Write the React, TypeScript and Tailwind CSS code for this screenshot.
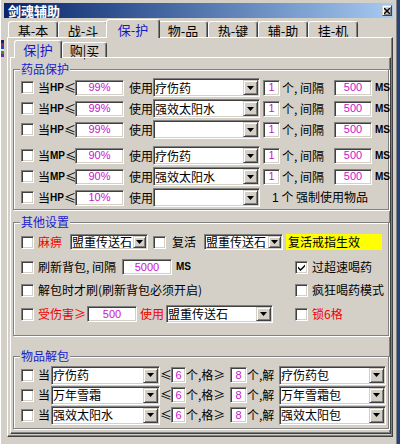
import type { ReactNode } from "react";

const SUNKEN =
	"border border-t-[#808080] border-l-[#808080] border-r-white border-b-white shadow-[inset_1px_1px_0_#404040,inset_-1px_-1px_0_#d4d0c8]";
const RAISED =
	"border border-t-[#d4d0c8] border-l-[#d4d0c8] border-r-[#404040] border-b-[#404040] shadow-[inset_1px_1px_0_#fff,inset_-1px_-1px_0_#808080]";
const ETCHED =
	"border border-[#808080] shadow-[inset_1px_1px_0_#fff,1px_1px_0_#fff]";
const NUM = "font-['Liberation_Sans',sans-serif]";

function Check({ on = false, cls = "" }: { on?: boolean; cls?: string }) {
	return (
		<span
			className={`flex h-[13px] w-[13px] shrink-0 items-center justify-center bg-white ${SUNKEN} ${cls}`}
		>
			{on && (
				<svg width="7" height="7" viewBox="0 0 7 7">
					<path d="M0 2.5 L2.5 5 L7 0.5 L7 2.5 L2.5 7 L0 4.5 Z" fill="#000" />
				</svg>
			)}
		</span>
	);
}

function Combo({ cls, btn = "w-[15px]", text = "" }: { cls: string; btn?: string; text?: string }) {
	return (
		<span className={`flex shrink-0 items-stretch bg-white p-[1px] ${SUNKEN} ${cls}`}>
			<span className="flex flex-1 items-center whitespace-nowrap leading-none">{text}</span>
			<span className={`flex shrink-0 items-center justify-center bg-[#d4d0c8] ${RAISED} ${btn}`}>
				<svg width="7" height="4" viewBox="0 0 7 4">
					<path d="M0 0h7L3.5 4z" fill="#000" />
				</svg>
			</span>
		</span>
	);
}

function Val({ cls, v }: { cls: string; v: string }) {
	return (
		<span
			className={`flex shrink-0 items-center justify-center bg-white text-[11px] leading-none text-[#cc10cc] ${NUM} ${SUNKEN} ${cls}`}
		>
			{v}
		</span>
	);
}

function Group({ title, cls, children }: { title: string; cls: string; children: ReactNode }) {
	return (
		<div className={`relative ml-[2px] w-[376px] ${ETCHED} ${cls}`}>
			<span className="absolute left-[6px] top-[-8px] bg-[#d4d0c8] px-[1px] text-[#1a1ad0]">
				{title}
			</span>
			{children}
		</div>
	);
}

const TABS = ["基-本", "战-斗", "保-护", "物-品", "热-键", "辅-助", "挂-机"];

const DRUGS = [
	{ k: "HP", p: "99%", item: "疗伤药" },
	{ k: "HP", p: "99%", item: "强效太阳水" },
	{ k: "HP", p: "99%", item: "" },
	{ k: "MP", p: "90%", item: "疗伤药", gap: true },
	{ k: "MP", p: "90%", item: "强效太阳水" },
	{ k: "HP", p: "10%", item: "", force: true },
];

const UNPACK = [
	["疗伤药", "疗伤药包"],
	["万年雪霜", "万年雪霜包"],
	["强效太阳水", "强效太阳包"],
];

export default function App() {
	return (
		<div className="flex h-[444px] w-[400px] overflow-hidden bg-[#24427e] font-['Noto_Sans_CJK_SC',sans-serif] text-[12px] leading-[14px] text-black">
			{/* left frame */}
			<div className="flex w-[4px] shrink-0 flex-col border-l border-l-white bg-[#d4d0c8]">
				<div className="mt-[40px] flex flex-col">
					<span className="h-[3px] bg-[#202060]" />
					<span className="h-[3px] bg-[#c02020]" />
					<span className="h-[3px] bg-[#2040e0]" />
					<span className="h-[2px] bg-[#e0e0e0]" />
					<span className="h-[3px] bg-[#20a020]" />
					<span className="h-[3px] bg-[#8020a0]" />
				</div>
			</div>

			<div className="flex w-[389px] shrink-0 flex-col bg-[#d4d0c8]">
				{/* title bar */}
				<div className="mt-[3px] flex h-[15px] items-center justify-between bg-gradient-to-r from-[#0a246a] to-[#a6caf0] pl-[4px] pr-[1px]">
					<span className="text-[13px] font-bold leading-none text-white">剑魂辅助</span>
					<span className={`flex h-[11px] w-[10px] items-center justify-center bg-[#d4d0c8] ${RAISED}`}>
						<svg width="6" height="6" viewBox="0 0 6 6">
							<path d="M0 0L6 6M6 0L0 6" stroke="#000" strokeWidth="1.4" />
						</svg>
					</span>
				</div>

				{/* main tabs */}
				<div className="ml-[3px] flex h-[19px] items-end pl-[1px]">
					{TABS.map((t, i) =>
						i === 2 ? (
							<div
								key={t}
								className="relative z-10 -mx-[2px] -mb-px flex h-[19px] w-[54px] items-center justify-center rounded-t-[3px] border-l border-r border-t border-l-white border-r-[#404040] border-t-white bg-[#d4d0c8] text-[13px] leading-none text-[#1414c8] shadow-[inset_-1px_0_0_#808080]"
							>
								{t}
							</div>
						) : (
							<div
								key={t}
								className="flex h-[16px] w-[50px] items-center justify-center rounded-t-[3px] border-l border-r border-t border-l-white border-r-[#404040] border-t-white pt-[2px] text-[13px] leading-none shadow-[inset_-1px_0_0_#808080]"
							>
								{t}
							</div>
						),
					)}
				</div>

				{/* tab panel */}
				<div className="ml-[3px] flex h-[400px] w-[386px] flex-col border-b border-l border-r border-t border-b-[#404040] border-l-white border-r-[#404040] border-t-white shadow-[inset_-1px_-1px_0_#808080]">
					{/* sub tabs */}
					<div className="flex h-[19px] items-end pl-[6px]">
						<div className="relative z-10 -mb-px flex h-[18px] w-[48px] items-center justify-center rounded-t-[3px] border-l border-r border-t border-l-white border-r-[#404040] border-t-white bg-[#d4d0c8] text-[13px] leading-none text-[#1414c8] shadow-[inset_-1px_0_0_#808080]">
							保|护
						</div>
						<div className="flex h-[15px] w-[45px] items-center justify-center rounded-t-[3px] border-l border-r border-t border-l-white border-r-[#404040] border-t-white pt-[1px] text-[13px] leading-none shadow-[inset_-1px_0_0_#808080]">
							购|买
						</div>
					</div>

					{/* sub panel */}
					<div className="ml-[2px] flex h-[377px] w-[381px] flex-col border-b border-l border-r border-t border-b-[#404040] border-l-white border-r-[#404040] border-t-white shadow-[inset_-1px_-1px_0_#808080]">
						{/* 药品保护 */}
						<Group title="药品保护" cls="mt-[11px] h-[141px] pl-[7px] pt-[7px]">
							{DRUGS.map((d, i) => (
								<div key={i} className={`flex h-[21px] items-center ${d.gap ? "mt-[5px]" : ""}`}>
									<Check />
									<span className="ml-[4px] flex w-[37px] shrink-0 items-center">
										当<span className={`text-[10px] font-bold ${NUM}`}>{d.k}</span>≤
									</span>
									<Val cls="h-[16px] w-[49px]" v={d.p} />
									<span className="ml-[5px] w-[24px] shrink-0">使用</span>
									<Combo cls="h-[19px] w-[107px]" text={d.item} />
									{d.force ? (
										<span className="ml-[12px] whitespace-nowrap">
											<span className={NUM}>1</span> 个 强制使用物品
										</span>
									) : (
										<>
											<Val cls="ml-[3px] h-[16px] w-[17px]" v="1" />
											<span className="ml-[2px] w-[50px] shrink-0 whitespace-nowrap">个, 间隔</span>
											<Val cls="ml-[2px] h-[16px] w-[38px]" v="500" />
											<span className={`ml-[3px] text-[10px] font-bold ${NUM}`}>MS</span>
										</>
									)}
								</div>
							))}
						</Group>

						{/* 其他设置 */}
						<Group title="其他设置" cls="mt-[12px] h-[114px] pl-[7px] pt-[8px]">
							<div className="flex h-[22px] items-center">
								<Check />
								<span className="ml-[4px] w-[32px] shrink-0 text-[#f00000]">麻痹</span>
								<Combo cls="h-[16px] w-[78px]" btn="w-[13px]" text="盟重传送石" />
								<Check cls="ml-[5px]" />
								<span className="ml-[6px] w-[32px] shrink-0">复活</span>
								<Combo cls="h-[16px] w-[79px]" btn="w-[13px]" text="盟重传送石" />
								<span className="ml-[3px] flex h-[16px] w-[96px] shrink-0 items-center bg-[#ffff00] pl-[2px]">
									复活戒指生效
								</span>
							</div>
							<div className="mt-[3px] flex h-[22px] items-center">
								<div className="flex w-[274px] shrink-0 items-center">
									<Check />
									<span className="ml-[4px] w-[84px] shrink-0 whitespace-nowrap">刷新背包, 间隔</span>
									<Val cls="h-[16px] w-[50px]" v="5000" />
									<span className={`ml-[4px] text-[10px] font-bold ${NUM}`}>MS</span>
								</div>
								<Check on />
								<span className="ml-[4px]">过超速喝药</span>
							</div>
							<div className="mt-[1px] flex h-[22px] items-center">
								<div className="flex w-[274px] shrink-0 items-center">
									<Check />
									<span className="ml-[4px] whitespace-nowrap">解包时才刷(刷新背包必须开启)</span>
								</div>
								<Check />
								<span className="ml-[4px]">疯狂喝药模式</span>
							</div>
							<div className="mt-[2px] flex h-[22px] items-center">
								<div className="flex w-[274px] shrink-0 items-center">
									<Check />
									<span className="ml-[4px] w-[49px] shrink-0 text-[#f00000]">受伤害≥</span>
									<Val cls="h-[16px] w-[50px]" v="500" />
									<span className="ml-[3px] w-[26px] shrink-0 text-[#f00000]">使用</span>
									<Combo cls="h-[18px] w-[107px]" text="盟重传送石" />
								</div>
								<Check />
								<span className="ml-[4px] text-[#f00000]">锁6格</span>
							</div>
						</Group>

						{/* 物品解包 */}
						<Group title="物品解包" cls="mt-[20px] h-[73px] pl-[7px] pt-[8px]">
							{UNPACK.map(([a, b]) => (
								<div key={a} className="flex h-[20px] items-center">
									<Check />
									<span className="ml-[4px] w-[13px] shrink-0">当</span>
									<Combo cls="h-[19px] w-[109px]" text={a} />
									<span className="w-[11px] shrink-0 text-center">≤</span>
									<Val cls="h-[16px] w-[15px]" v="6" />
									<span className="w-[44px] shrink-0 whitespace-nowrap">个,格≥</span>
									<Val cls="h-[16px] w-[17px]" v="8" />
									<span className="w-[32px] shrink-0 whitespace-nowrap">个,解</span>
									<Combo cls="h-[19px] w-[107px]" text={b} />
								</div>
							))}
						</Group>
					</div>
				</div>
			</div>

			{/* right frame */}
			<div className="w-[4px] shrink-0 border-r border-r-[#808080] bg-[#d4d0c8]" />
		</div>
	);
}
